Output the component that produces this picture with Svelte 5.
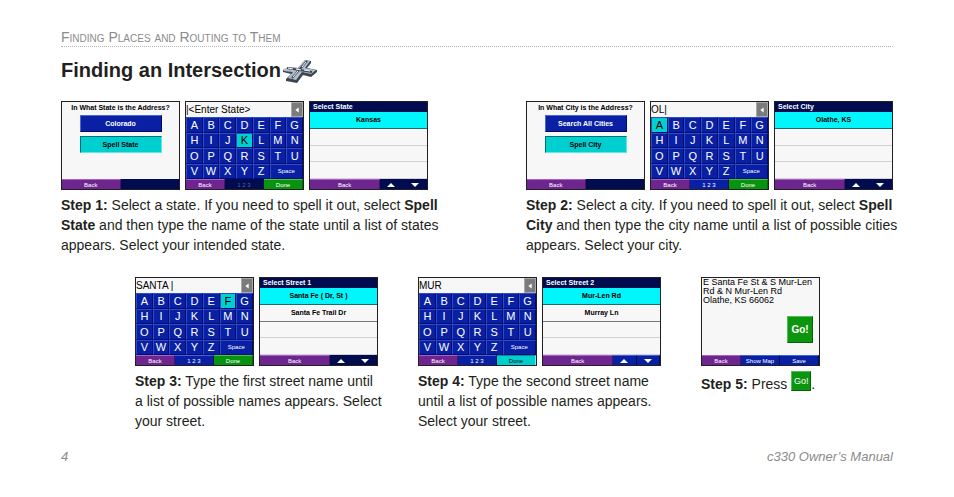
<script lang="ts">
  type Screen = {
    kind: 'choice' | 'keyboard' | 'list' | 'review';
    title?: string;
    options?: string[];
    value?: string;
    active?: string;
    digitsOff?: boolean;
    rows?: string[];
    paging?: boolean;
    address?: string[];
  };

  type Step = {
    id: number;
    screens: Screen[];
    lines: { text: string; bold?: boolean }[][];
    go?: boolean;
  };

  const letters = 'ABCDEFGHIJKLMNOPQRSTUVWXYZ'.split('');

  const topSteps: Step[] = [
    {
      id: 1,
      screens: [
        { kind: 'choice', title: 'In What State is the Address?', options: ['Colorado', 'Spell State'] },
        { kind: 'keyboard', value: '|<Enter State>', active: 'K', digitsOff: true },
        { kind: 'list', title: 'Select State', rows: ['Kansas', '', '', ''] },
      ],
      lines: [
        [{ text: 'Select a state. If you need to spell it out, select ' }, { text: 'Spell', bold: true }],
        [{ text: 'State', bold: true }, { text: ' and then type the name of the state until a list of states' }],
        [{ text: 'appears. Select your intended state.' }],
      ],
    },
    {
      id: 2,
      screens: [
        { kind: 'choice', title: 'In What City is the Address?', options: ['Search All Cities', 'Spell City'] },
        { kind: 'keyboard', value: 'OL|', active: 'A' },
        { kind: 'list', title: 'Select City', rows: ['Olathe, KS', '', '', ''] },
      ],
      lines: [
        [{ text: 'Select a city. If you need to spell it out, select ' }, { text: 'Spell', bold: true }],
        [{ text: 'City', bold: true }, { text: ' and then type the city name until a list of possible cities' }],
        [{ text: 'appears. Select your city.' }],
      ],
    },
  ];

  const bottomSteps: Step[] = [
    {
      id: 3,
      screens: [
        { kind: 'keyboard', value: 'SANTA |', active: 'F' },
        { kind: 'list', title: 'Select Street 1', rows: ['Santa Fe ( Dr, St )', 'Santa Fe Trail Dr', '', ''] },
      ],
      lines: [
        [{ text: 'Type the first street name until' }],
        [{ text: 'a list of possible names appears. Select' }],
        [{ text: 'your street.' }],
      ],
    },
    {
      id: 4,
      screens: [
        { kind: 'keyboard', value: 'MUR', active: 'Done' },
        { kind: 'list', title: 'Select Street 2', rows: ['Mur-Len Rd', 'Murray Ln', '', ''], paging: true },
      ],
      lines: [
        [{ text: 'Type the second street name' }],
        [{ text: 'until a list of possible names appears.' }],
        [{ text: 'Select your street.' }],
      ],
    },
    {
      id: 5,
      screens: [{ kind: 'review', address: ['E Santa Fe St & S Mur-Len', 'Rd & N Mur-Len Rd', 'Olathe, KS 66062'] }],
      lines: [[{ text: 'Press ' }]],
      go: true,
    },
  ];
</script>

{#snippet device(screen: Screen)}
  <div class="screen {screen.kind}">
    {#if screen.kind === 'choice'}
      <p class="question">{screen.title}</p>
      <div class="options">
        {#each screen.options ?? [] as option, idx}
          <button class="option" class:lit={idx === 1}>{option}</button>
        {/each}
      </div>
      <div class="bar split">
        <button class="soft back">Back</button>
        <span class="soft off"></span>
      </div>
    {:else if screen.kind === 'keyboard'}
      <div class="entry">
        <input type="text" value={screen.value} aria-label="Spelling" />
        <button class="erase" aria-label="Delete">
          <svg viewBox="0 0 12 12"><path d="M8 3v6L4 6z" fill="#fff" /></svg>
        </button>
      </div>
      <div class="keys">
        {#each letters as letter}
          <button class="key" class:lit={screen.active === letter}>{letter}</button>
        {/each}
        <button class="key space">Space</button>
      </div>
      <div class="bar thirds">
        <button class="soft back">Back</button>
        <button class="soft" class:off={screen.digitsOff}>1 2 3</button>
        <button class="soft done" class:lit={screen.active === 'Done'}>Done</button>
      </div>
    {:else if screen.kind === 'list'}
      <h3>{screen.title}</h3>
      <ul>
        {#each screen.rows ?? [] as row, idx}
          <li class:lit={idx === 0} class:filled={row}>{row}</li>
        {/each}
      </ul>
      <div class="bar paged">
        <button class="soft back">Back</button>
        <button class="soft" class:off={!screen.paging} aria-label="Up">
          <svg viewBox="0 0 10 6"><path d="M5 1l4 4H1z" fill="#fff" /></svg>
        </button>
        <button class="soft" class:off={!screen.paging} aria-label="Down">
          <svg viewBox="0 0 10 6"><path d="M5 5l4-4H1z" fill="#fff" /></svg>
        </button>
      </div>
    {:else}
      <p class="address">
        {#each screen.address ?? [] as line}
          <span>{line}</span>
        {/each}
      </p>
      <button class="go">Go!</button>
      <div class="bar thirds">
        <button class="soft back">Back</button>
        <button class="soft">Show Map</button>
        <button class="soft">Save</button>
      </div>
    {/if}
  </div>
{/snippet}

{#snippet stepBlock(step: Step)}
  <section class="step">
    <div class="screens">
      {#each step.screens as screen}
        {@render device(screen)}
      {/each}
    </div>
    <p class="text">
      <b>Step {step.id}:</b>{' '}{#each step.lines as line, idx}{#if idx > 0}<br />{/if}{#each line as part}{#if part.bold}<b>{part.text}</b>{:else}{part.text}{/if}{/each}{/each}{#if step.go}<button class="go small">Go!</button>.{/if}
    </p>
  </section>
{/snippet}

<main>
  <header>Finding Places and Routing to Them</header>

  <h1>
    Finding an Intersection
    <svg class="roads" viewBox="0 0 36 26" aria-hidden="true">
      <path d="M1 13l7-3 8 1 7-8 6 1v2l-4 5 10 2v2l-6 5-8-2-6 8-11-2v-2l5-5-8-2z" fill="#3d4550" />
      <path d="M1 12l7-2 8 1 7-8 5 1-5 7 11 2-5 4-9-2-6 8-8-2 5-6-9-1z" fill="#b3bfce" />
      <path d="M5 11l25 4M25 4L10 21" stroke="#3d4550" stroke-width="2" fill="none" />
      <path d="M6 11l5 1M14 12l5 1M22 13l6 1M24 5l-4 5M16 14l-5 6" stroke="#fff" stroke-width="1" fill="none" />
    </svg>
  </h1>

  <div class="row top">
    {#each topSteps as step}
      {@render stepBlock(step)}
    {/each}
  </div>
  <div class="row bottom">
    {#each bottomSteps as step}
      {@render stepBlock(step)}
    {/each}
  </div>

  <footer>
    <span>4</span>
    <span>c330 Owner’s Manual</span>
  </footer>
</main>

<style>
  :global(body) {
    margin: 0;
    background: #fff;
  }
  main {
    box-sizing: border-box;
    padding: 27px 61px 0;
    font-family: 'Liberation Sans', Arial, sans-serif;
    color: #231f20;
  }
  main :global(*) {
    box-sizing: border-box;
  }
  p,
  h1,
  h3,
  ul {
    margin: 0;
    padding: 0;
  }
  button,
  input {
    margin: 0;
    padding: 0;
    border: 0;
    border-radius: 0;
    font-family: inherit;
  }
  header {
    height: 20px;
    border-bottom: 1px dotted #b5b5b5;
    font-size: 14px;
    line-height: 20px;
    font-variant: small-caps;
    color: #8b8b8b;
  }
  h1 {
    display: flex;
    align-items: center;
    gap: 1px;
    margin-top: 9px;
    font-size: 20px;
    line-height: 28px;
  }
  .roads {
    width: 36px;
    height: 26px;
  }
  .row {
    display: flex;
  }
  .top {
    justify-content: space-between;
    margin-top: 17px;
  }
  .bottom {
    gap: 40px;
    margin-top: 22px;
    padding-left: 74px;
  }
  .step {
    flex: none;
  }
  .screens {
    display: flex;
    gap: 5px;
  }
  /* captions may run past the screens without widening the step */
  .text {
    width: 0;
    min-width: 100%;
    margin-top: 5px;
    font-size: 14px;
    line-height: 20px;
    white-space: nowrap;
  }

  /* device screens */
  .screen {
    display: flex;
    flex-direction: column;
    width: 119px;
    height: 89px;
    border: 1px solid #231f20;
    background: #f7f7f7;
    color: #000;
    font-size: 7px;
    font-weight: bold;
    line-height: 8px;
    white-space: nowrap;
    overflow: hidden;
  }
  .screen button {
    font-size: 7px;
    line-height: 8px;
    color: #fff;
    background: #0a20a4;
  }
  .bar {
    display: grid;
    flex: none;
    height: 10px;
    background: #000b50;
  }
  .split {
    grid-template-columns: 1fr 1fr;
  }
  .thirds {
    grid-template-columns: 1fr 1fr 1fr;
  }
  .paged {
    grid-template-columns: 3fr 1fr 1fr;
  }
  .screen .soft {
    display: flex;
    align-items: center;
    justify-content: center;
    border-top: 1px solid #4661d4;
    border-right: 1px solid #00104f;
    font-size: 6px;
    font-weight: normal;
  }
  .soft svg {
    width: 10px;
    height: 6px;
  }
  .screen .back {
    background: #6f2590;
    border-color: #a763c3 #4b1466;
  }
  .screen .off {
    background: #000b50;
    border-color: #000b50;
    color: #53619b;
  }
  .screen .done {
    background: #07930e;
    border-color: #45c44b #056b0a;
  }
  .screen .lit {
    background: #00cfd0;
    border-color: #008c98 #6ff0f0 #6ff0f0 #008c98;
    color: #000;
  }
  .question {
    padding-top: 2px;
    text-align: center;
  }
  .options {
    display: flex;
    flex: 1;
    flex-direction: column;
    align-items: center;
    gap: 4px;
    padding-top: 3px;
  }
  .screen .option {
    width: 82px;
    height: 17px;
    border: 1px solid;
    border-color: #4a66d8 #000a60 #000a60 #4a66d8;
    font-weight: bold;
  }
  .screen .option.lit {
    border-color: #006f78 #5fe8e8 #5fe8e8 #006f78;
  }
  .entry {
    display: flex;
    flex: none;
    height: 15px;
  }
  .entry input {
    flex: 1;
    min-width: 0;
    background: #f7f7f7;
    font-size: 10px;
    color: #000;
  }
  .screen .erase {
    width: 12px;
    border: 1px solid #a9a9a9;
    background: #7b7b7b;
  }
  .erase svg {
    display: block;
    width: 10px;
    height: 12px;
  }
  .keys {
    display: grid;
    flex: 1;
    grid-template-columns: repeat(7, 1fr);
    grid-template-rows: repeat(4, 1fr);
    min-height: 0;
    background: #000b50;
  }
  .screen .key {
    min-width: 0;
    border: 1px solid;
    border-color: #2f4cc8 #000c6e #000c6e #2f4cc8;
    font-size: 11px;
    line-height: 12px;
  }
  .screen .space {
    grid-column: span 2;
    font-size: 6px;
  }
  h3 {
    flex: none;
    height: 10px;
    padding-left: 3px;
    background: #000b50;
    color: #fff;
    font-size: 7px;
    line-height: 10px;
  }
  ul {
    display: grid;
    flex: 1;
    grid-template-rows: repeat(4, 1fr);
    list-style: none;
  }
  li {
    display: flex;
    align-items: center;
    justify-content: center;
    border-bottom: 1px solid #d2d2d2;
  }
  li.filled {
    border-color: #777;
  }
  .screen li.lit {
    background: #00f6fa;
    border-color: #1d6d70;
  }
  .address {
    font-size: 9px;
    font-weight: normal;
    line-height: 9px;
  }
  .address span {
    display: block;
    padding-left: 1px;
  }
  .screen .go,
  .go.small {
    border: 1px solid;
    border-color: #51bd55 #046208 #046208 #51bd55;
    background: #0c960f;
    color: #fff;
  }
  .screen .go {
    align-self: flex-end;
    width: 26px;
    height: 27px;
    margin: 11px 6px auto 0;
    font-size: 10px;
    font-weight: bold;
  }
  .go.small {
    width: 20px;
    height: 20px;
    font-size: 9px;
    line-height: 10px;
    vertical-align: 5px;
  }

  footer {
    display: flex;
    justify-content: space-between;
    margin-top: 16px;
    font-size: 13px;
    line-height: 20px;
    font-style: italic;
    color: #8b8b8b;
  }
</style>
